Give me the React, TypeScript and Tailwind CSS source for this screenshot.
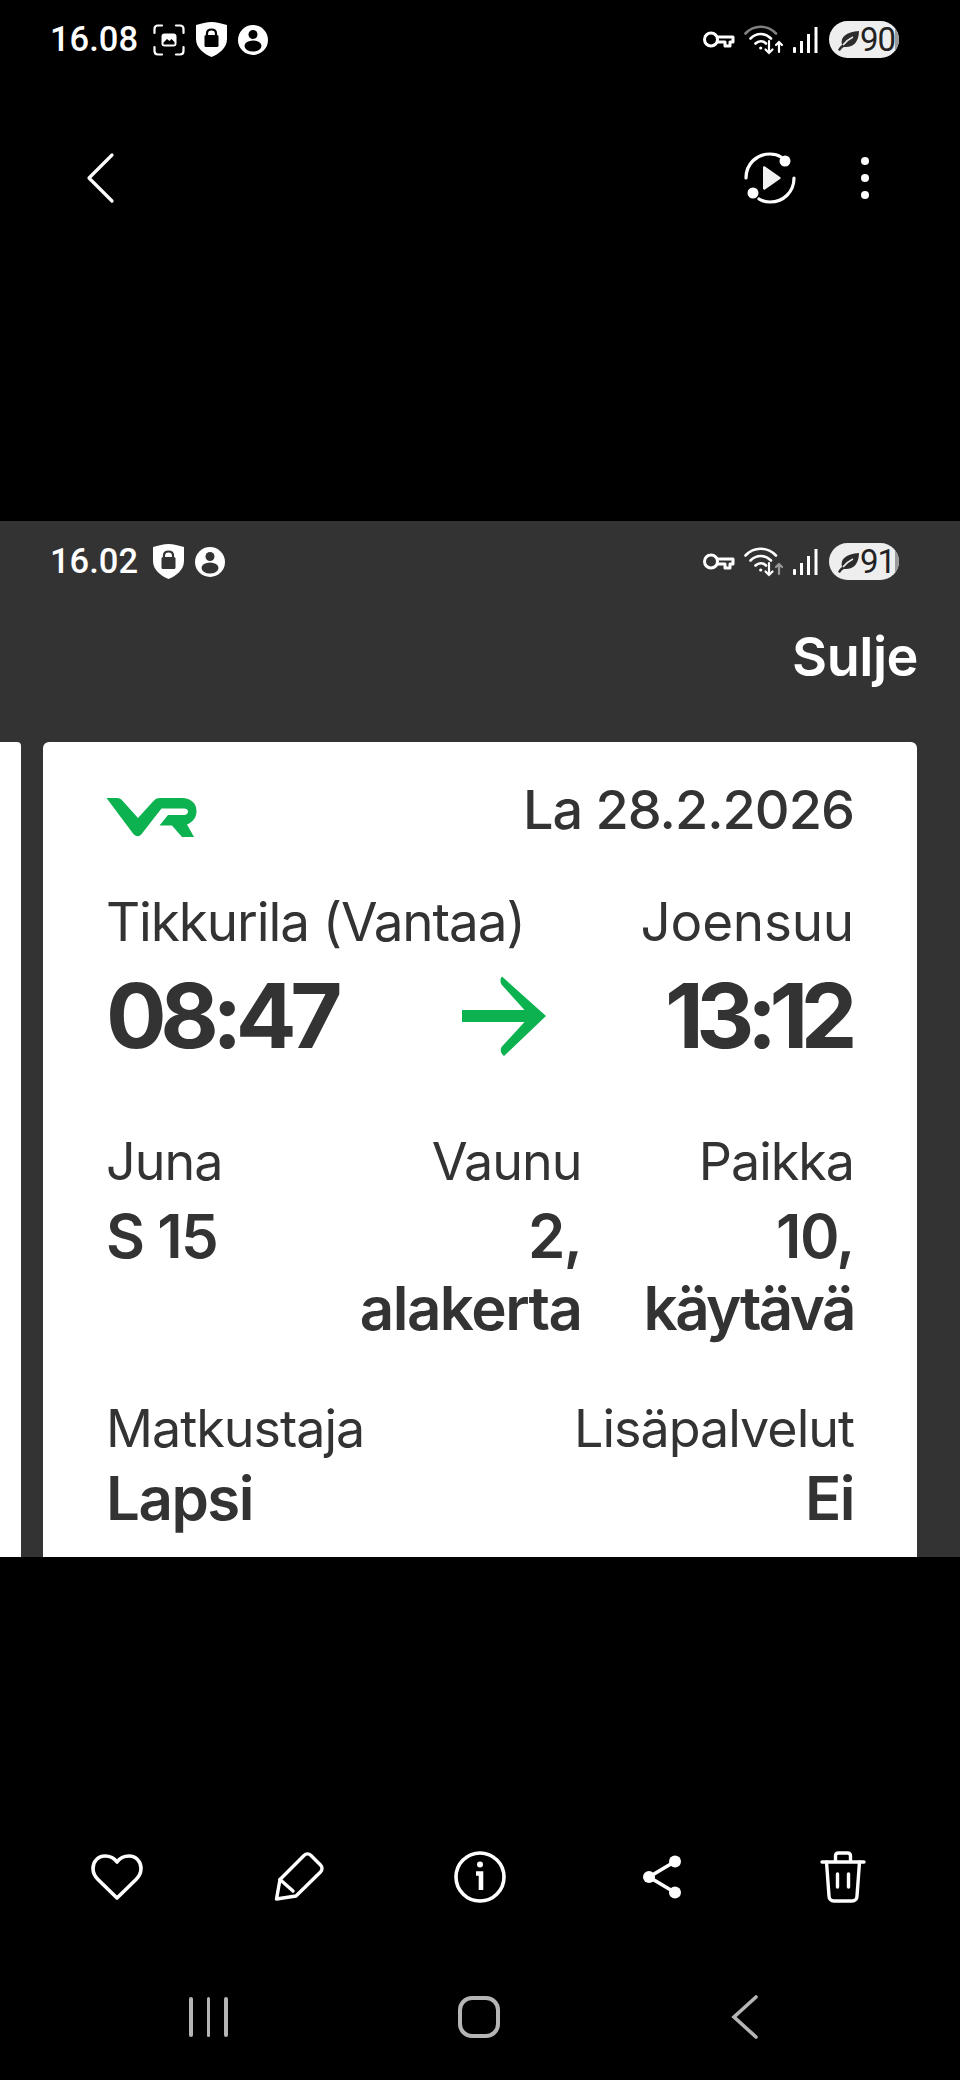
import React from 'react';

const KeyIcon = () => (
  <svg width="33" height="19" viewBox="0 0 33 19" fill="none" stroke="currentColor" strokeWidth="3">
    <circle cx="9" cy="9.5" r="6.5" />
    <path d="M15.5 7h15.5v5h-3v4h-5v-4h-7.5" strokeLinejoin="round" />
  </svg>
);

const WifiIcon = ({ dim }: { dim?: 'top' | 'up' }) => (
  <svg width="40" height="31" viewBox="0 0 40 31" fill="none" stroke="currentColor" strokeWidth="2.6" strokeLinecap="round">
    <path d="M1.5 9.5C10 0.5 23 0.5 32 9.5" opacity={dim === 'top' ? 0.5 : 1} />
    <path d="M6.5 14.5C12.5 8.5 21 8.5 27 14.5" />
    <path d="M11.5 19.5C14.5 16.5 19 16.5 22 19.5" />
    <circle cx="16.7" cy="24" r="1.6" fill="currentColor" stroke="none" />
    <path d="M25 17v12M21.5 25.5l3.5 3.5 3.5-3.5" strokeWidth="2.2" />
    <g opacity={dim === 'up' ? 0.5 : 1}>
      <path d="M35 28V18M32 21l3-3 3 3" strokeWidth="2.2" />
    </g>
  </svg>
);

const SignalIcon = () => (
  <svg width="25" height="26" viewBox="0 0 25 26" fill="currentColor">
    <rect x="0" y="20" width="3" height="6" rx="1" />
    <rect x="7" y="14" width="3" height="12" />
    <rect x="14" y="7" width="3" height="19" />
    <rect x="21.5" y="0" width="3" height="26" />
  </svg>
);

const Battery = ({ level }: { level: string }) => (
  <div className="flex items-center h-[37px] w-[70px] rounded-full overflow-hidden relative bg-[#eeeeee]">
    <div className="absolute right-0 top-0 bottom-0 w-[4px] bg-[#9a9a9a]" />
    <svg width="25" height="24" viewBox="0 0 25 24" className="ml-[7px] shrink-0">
      <path d="M2 22C3 20 4 18 6 17C4 9 10 4 23 3C23 14 17 20 8 19C6 20 5 21 4 23Z" fill="#2c2c2c" />
      <path d="M7 17C10 13 13 11 17 9" stroke="#e8e8e8" strokeWidth="1.6" fill="none" />
    </svg>
    <span className="text-[33px] leading-none font-['Roboto',sans-serif] text-[#222] tracking-[-1px] -ml-[1px]">{level}</span>
  </div>
);

const ShieldIcon = ({ fg }: { fg: string }) => (
  <svg width="31" height="35" viewBox="0 0 31 35">
    <path d="M15.5 0C20 0 26 1.5 31 3V17C31 26 23 32 15.5 35C8 32 0 26 0 17V3C5 1.5 11 0 15.5 0Z" fill="#fff" />
    <rect x="8.5" y="13" width="14" height="12" rx="1.5" fill={fg} />
    <path d="M11 14V11.5C11 8.5 13 7.5 15.5 7.5C18 7.5 20 8.5 20 11.5V14" fill="none" stroke={fg} strokeWidth="2.2" />
  </svg>
);

const PersonIcon = ({ fg }: { fg: string }) => (
  <svg width="30" height="30" viewBox="0 0 30 30">
    <circle cx="15" cy="15" r="15" fill="#fff" />
    <circle cx="15" cy="9.5" r="4.5" fill={fg} />
    <ellipse cx="15" cy="21" rx="8.5" ry="5.5" fill={fg} />
  </svg>
);

const CaptureIcon = () => (
  <svg width="32" height="32" viewBox="0 0 32 32" fill="none" stroke="#fff" strokeWidth="2.2" strokeLinecap="round">
    <path d="M1.5 9V5C1.5 3 3 1.5 5 1.5H9M23 1.5H27C29 1.5 30.5 3 30.5 5V9M30.5 23V27C30.5 29 29 30.5 27 30.5H23M9 30.5H5C3 30.5 1.5 29 1.5 27V23" />
    <rect x="8.5" y="9.5" width="15" height="13" rx="3" fill="#fff" stroke="none" />
    <path d="M10.5 18.5L14 15L16.5 17L18.5 15L21.5 18V20.5H10.5Z" fill="#000" stroke="none" />
  </svg>
);

const StatusBar = ({ time, level, shot, fg }: { time: string; level: string; shot?: boolean; fg: string }) => (
  <div className="flex items-center justify-between pl-[50px] pr-[61px] text-white">
    <div className="flex items-center">
      <span className="text-[34.5px] leading-none font-medium font-['Roboto',sans-serif] w-[103px]">{time}</span>
      {shot && <div className="mr-[11px]"><CaptureIcon /></div>}
      <div className="mr-[11px]"><ShieldIcon fg={fg} /></div>
      <PersonIcon fg={fg} />
    </div>
    <div className="flex items-center">
      <div className="mr-[9px]"><KeyIcon /></div>
      <div className="mr-[9px]"><WifiIcon dim={shot ? 'top' : 'up'} /></div>
      <div className="mr-[11px]"><SignalIcon /></div>
      <Battery level={level} />
    </div>
  </div>
);

const VrLogo = () => (
  <svg width="91" height="41" viewBox="0 0 91 41" fill="#0bb24f">
    <path d="M0.5 1H11C13.5 1 15 2 16.5 3.8L32 21L47 4.5C49 2 51 1 54 1H76C85 1 90.5 6.5 90.5 14C90.5 20.5 87 25 81 27.5L88 40H76L66 28.5H53.5L62 18H78C80.5 18 82 16.5 82 14.5C82 12.5 80.5 11.5 78 11.5H55.5L36 36.5C33.5 40 30 40 27 36.5Z" />
  </svg>
);

const Field = ({ label, value, right, tight }: { label: string; value: React.ReactNode; right?: boolean; tight?: boolean }) => (
  <div className={right ? 'text-right' : ''}>
    <div className="text-[52px] leading-[57px] tracking-[-1px]">{label}</div>
    <div className={`text-[60px] leading-[72px] font-semibold tracking-[-1.5px] ${tight ? 'mt-[5px]' : 'mt-[10px]'}`}>{value}</div>
  </div>
);

const HeartIcon = () => (
  <svg width="52" height="46" viewBox="0 0 52 46" fill="none" stroke="#fff" strokeWidth="3.6" strokeLinejoin="round">
    <path d="M26 8C22.5 3 18 2 14 2C7 2 2 7.5 2 14.5C2 19 4 22.5 7 25.5L26 44L45 25.5C48 22.5 50 19 50 14.5C50 7.5 45 2 38 2C34 2 29.5 3 26 8Z" />
  </svg>
);

const PencilIcon = () => (
  <svg width="50" height="50" viewBox="0 0 50 50" fill="none" stroke="#fff" strokeWidth="3.4" strokeLinejoin="round" strokeLinecap="round">
    <path d="M2.5 47L6 27.5L30 3.5C32 1.5 35 1.5 37 3.5L46.5 13C48.5 15 48.5 18 46.5 20L22 44Z" />
    <path d="M6 27.5L19 39" />
  </svg>
);

const InfoIcon = () => (
  <svg width="52" height="52" viewBox="0 0 52 52" fill="none" stroke="#fff" strokeWidth="3.6">
    <circle cx="26" cy="26" r="24" />
    <path d="M22 22.5H27V39" strokeWidth="4.6" />
    <circle cx="26" cy="13.5" r="3" fill="#fff" stroke="none" />
  </svg>
);

const ShareIcon = () => (
  <svg width="40" height="44" viewBox="0 0 40 44" fill="#fff" stroke="none">
    <path d="M33 6.5L7 22L33 37.5" fill="none" stroke="#fff" strokeWidth="3.6" />
    <circle cx="33" cy="6.5" r="6" />
    <circle cx="7" cy="22" r="6" />
    <circle cx="33" cy="37.5" r="6" />
  </svg>
);

const TrashIcon = () => (
  <svg width="46" height="52" viewBox="0 0 46 52" fill="none" stroke="#fff" strokeWidth="3.4" strokeLinecap="round" strokeLinejoin="round">
    <path d="M2 11H44" />
    <path d="M15.5 10V5C15.5 3 16.5 2 18.5 2H27.5C29.5 2 30.5 3 30.5 5V10" />
    <path d="M6.5 11L9 45C9 48 11 50 14 50H32C35 50 37 48 37 45L39.5 11" />
    <path d="M17.5 23V36M28.5 23V36" />
  </svg>
);

const ActionSlot = ({ children }: { children: React.ReactNode }) => (
  <div className="w-[60px] flex justify-center">{children}</div>
);

export default function App() {
  return (
    <div className="w-[960px] h-[2080px] bg-black flex flex-col font-['Inter',sans-serif] overflow-hidden">
      {/* photo viewer top */}
      <div className="h-[521px] pt-[21px] shrink-0">
        <StatusBar time="16.08" level="90" shot fg="#000" />
        <div className="flex items-center justify-between pl-[86px] pr-[91px] mt-[94px]">
          <svg width="30" height="52" viewBox="0 0 30 52" fill="none" stroke="#fff" strokeWidth="3.2" strokeLinecap="round" strokeLinejoin="round">
            <path d="M26 3L3 26L26 49" />
          </svg>
          <div className="flex items-center">
            <svg width="52" height="52" viewBox="0 0 52 52" className="mr-[65px]">
              <path d="M2 26C2 12 12.5 2 26 2C30 2 34 3 37 5M50 26C50 40 39.5 50 26 50C22 50 18 49 15 47" fill="none" stroke="#fff" strokeWidth="3.2" strokeLinecap="round" />
              <circle cx="41" cy="9" r="5.5" fill="#fff" />
              <circle cx="9" cy="41" r="5.5" fill="#fff" />
              <path d="M19 15.5C19 14.5 20 14 21 14.5L36 25C37 25.5 37 26.5 36 27L21 37.5C20 38 19 37.5 19 36.5Z" fill="#f2f2f2" />
            </svg>
            <div className="flex flex-col gap-[9px]">
              <div className="w-[8px] h-[8px] rounded-full bg-white" />
              <div className="w-[8px] h-[8px] rounded-full bg-white" />
              <div className="w-[8px] h-[8px] rounded-full bg-white" />
            </div>
          </div>
        </div>
      </div>

      {/* ticket screenshot */}
      <div className="h-[1036px] shrink-0 bg-[#333333] flex flex-col overflow-hidden">
        <div className="h-[221px] pt-[22px] shrink-0">
          <StatusBar time="16.02" level="91" fg="#333333" />
          <div className="text-right pr-[42px] mt-[47px] text-[54px] leading-[60px] font-semibold text-white tracking-[-0.5px]">Sulje</div>
        </div>
        <div className="flex flex-1 min-h-0">
          <div className="w-[21px] bg-white rounded-tr-[4px] mr-[22px]" />
          <div className="w-[874px] bg-white rounded-t-[6px] text-[#333333] px-[63px] pt-[38px] overflow-hidden">
            <div className="flex items-start justify-between h-[112px]">
              <div className="pt-[17px]"><VrLogo /></div>
              <div className="text-[54px] leading-[60px] font-medium tracking-[-1px]">La 28.2.2026</div>
            </div>
            <div className="flex items-center justify-between">
              <div className="text-[53px] leading-[60px] tracking-[-1.1px]">Tikkurila (Vantaa)</div>
              <div className="text-[53px] leading-[60px] tracking-[-0.2px]">Joensuu</div>
            </div>
            <div className="flex items-center justify-between mt-[14px]">
              <div className="text-[90px] leading-[100px] font-bold tracking-[-6.5px] w-[354px]">08:47</div>
              <svg width="84" height="80" viewBox="0 0 84 80" fill="#0bb24f">
                <path d="M40 0.5L84 40L42 80C38.5 77 38 74 39.5 71L62.5 46H0V34H62.5L39.5 8.5C38 5.5 38 3 40 0.5Z" />
              </svg>
              <div className="text-[90px] leading-[100px] font-bold tracking-[-7.5px] w-[306px] text-right pr-[4px]">13:12</div>
            </div>
            <div className="flex gap-[62px] mt-[67px]">
              <div className="flex-1"><Field label="Juna" value="S 15" /></div>
              <Field right label="Vaunu" value={<>2,<br />alakerta</>} />
              <Field right label="Paikka" value={<>10,<br /><span className="tracking-[-2.5px]">käytävä</span></>} />
            </div>
            <div className="flex justify-between mt-[56px]">
              <Field tight label="Matkustaja" value="Lapsi" />
              <Field tight right label="Lisäpalvelut" value="Ei" />
            </div>
          </div>
        </div>
      </div>

      {/* photo viewer bottom */}
      <div className="flex-1 flex flex-col">
        <div className="flex items-center justify-between px-[87px] mt-[294px] h-[52px]">
          <ActionSlot><HeartIcon /></ActionSlot>
          <ActionSlot><PencilIcon /></ActionSlot>
          <ActionSlot><InfoIcon /></ActionSlot>
          <ActionSlot><ShareIcon /></ActionSlot>
          <ActionSlot><TrashIcon /></ActionSlot>
        </div>
        <div className="flex items-center justify-between pl-[189px] pr-[201px] mt-[92px] h-[44px]">
          <div className="flex gap-[14px]">
            <div className="w-[3.5px] h-[40px] rounded-full bg-[#b5b5b5]" />
            <div className="w-[3.5px] h-[40px] rounded-full bg-[#b5b5b5]" />
            <div className="w-[3.5px] h-[40px] rounded-full bg-[#b5b5b5]" />
          </div>
          <div className="w-[42px] h-[42px] rounded-[14px] border-[4px] border-[#b5b5b5]" />
          <svg width="28" height="44" viewBox="0 0 28 44" fill="none" stroke="#b5b5b5" strokeWidth="3.6" strokeLinecap="round">
            <path d="M25 2L3 22L25 42" />
          </svg>
        </div>
      </div>
    </div>
  );
}
